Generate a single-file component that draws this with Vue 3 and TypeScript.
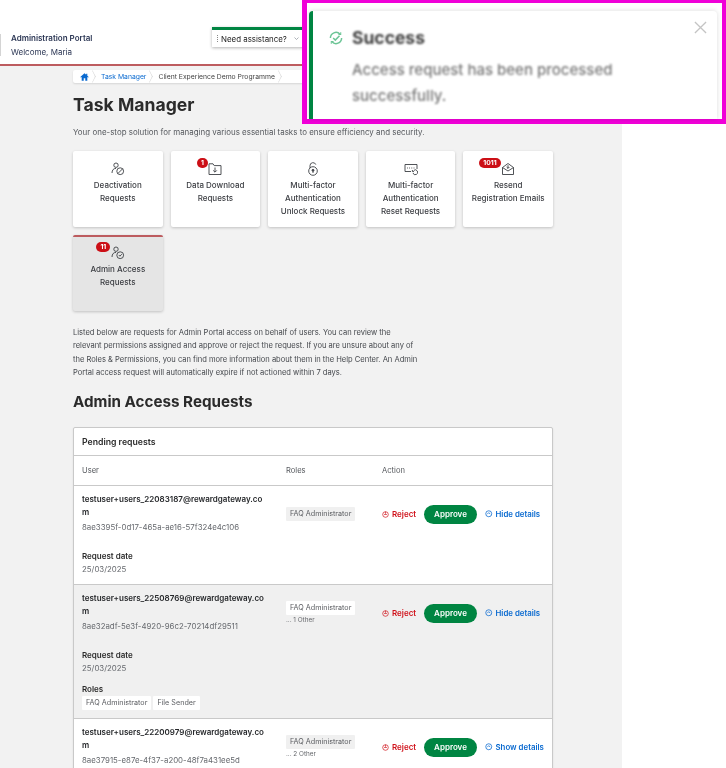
<script setup lang="ts">
type Task = { key: string; lines: string[]; badge?: string; active?: boolean }
type Req = {
  email: string
  id: string
  date: string
  role: string
  other?: string
  open: boolean
  shaded?: boolean
  roles?: string[]
}

const tasks: Task[] = [
  { key: 'block', lines: ['Deactivation', 'Requests'] },
  { key: 'folder', lines: ['Data Download', 'Requests'], badge: '1' },
  { key: 'lock', lines: ['Multi-factor', 'Authentication', 'Unlock Requests'] },
  { key: 'reset', lines: ['Multi-factor', 'Authentication', 'Reset Requests'] },
  { key: 'mail', lines: ['Resend', 'Registration Emails'], badge: '1011' },
  { key: 'admin', lines: ['Admin Access', 'Requests'], badge: '11', active: true }
]

const requests: Req[] = [
  {
    email: 'testuser+users_22083187@rewardgateway.com',
    id: '8ae3395f-0d17-465a-ae16-57f324e4c106',
    date: '25/03/2025',
    role: 'FAQ Administrator',
    open: true
  },
  {
    email: 'testuser+users_22508769@rewardgateway.com',
    id: '8ae32adf-5e3f-4920-96c2-70214df29511',
    date: '25/03/2025',
    role: 'FAQ Administrator',
    other: '... 1 Other',
    open: true,
    shaded: true,
    roles: ['FAQ Administrator', 'File Sender']
  },
  {
    email: 'testuser+users_22200979@rewardgateway.com',
    id: '8ae37915-e87e-4f37-a200-48f7a431ee5d',
    date: '25/03/2025',
    role: 'FAQ Administrator',
    other: '... 2 Other',
    open: false
  }
]
</script>

<template>
  <div class="page">
    <header class="topbar">
      <div class="brand">
        <div class="brand-name">Administration Portal</div>
        <div class="brand-user">Welcome, Maria</div>
      </div>
      <div class="assist">
        <span class="grip"></span>
        <span>Need assistance?</span>
        <svg class="chev" viewBox="0 0 10 10" width="5" height="5"><path d="M1 3l4 4 4-4" fill="none" stroke="#8a8f98" stroke-width="1.4" /></svg>
      </div>
    </header>

    <main class="content">
      <nav class="crumbs">
        <span class="crumb home">
          <svg viewBox="0 0 16 14" width="9" height="8"><path d="M8 0.5L0.5 7l1 1.1L3 6.9V13.5h3.6V9h2.8v4.5H13V6.9l1.5 1.2 1-1.1-2.5-2.2V1h-2v2.1z" fill="#0a6ad0" /></svg>
        </span>
        <span class="crumb link">Task Manager</span>
        <span class="crumb">Client Experience Demo Programme</span>
      </nav>

      <h1>Task Manager</h1>
      <p class="lead">Your one-stop solution for managing various essential tasks to ensure efficiency and security.</p>

      <section class="tasks">
        <div v-for="t in tasks" :key="t.key" class="task" :class="{ active: t.active }">
          <div class="task-icon">
            <span v-if="t.badge" class="badge">{{ t.badge }}</span>
            <svg viewBox="0 0 14 14" width="14" height="14" fill="none" stroke="#3c3f44" stroke-width="0.9">
              <template v-if="t.key === 'block'">
                <circle cx="5" cy="3.2" r="2.2" />
                <path d="M1 11c0-3 1.6-4.6 4-4.6" />
                <circle cx="9.2" cy="9.2" r="3.4" />
                <path d="M6.8 11.6l4.8-4.8" />
              </template>
              <template v-else-if="t.key === 'folder'">
                <path d="M1 12.5V1.8h4l1.2 1.8h6.8v8.9z" />
                <path d="M7 5.5v4.5M5.2 8.4L7 10.2l1.8-1.8" />
              </template>
              <template v-else-if="t.key === 'lock'">
                <path d="M4 6V3.6a3 3 0 0 1 5.8-1" />
                <circle cx="7" cy="9" r="4.3" />
                <circle cx="7" cy="8.3" r="1" fill="#3c3f44" />
                <path d="M7 9v2" />
              </template>
              <template v-else-if="t.key === 'reset'">
                <path d="M7 9.5H1V2.5h12V7" />
                <path d="M3 6h.8M5.2 6H6M7.4 6h.8M9.6 6h.8" stroke-width="1.2" />
                <path d="M9 11a2.4 2.4 0 1 0 .8-2.6" />
                <path d="M8.4 8v1.6H10" />
              </template>
              <template v-else-if="t.key === 'mail'">
                <path d="M1.5 5.5L7 1.5l5.5 4v7h-11z" />
                <path d="M1.5 5.5L7 9l5.5-3.5" />
                <path d="M7 3.2v3.2M5.6 5L7 6.4 8.4 5" />
              </template>
              <template v-else>
                <circle cx="5" cy="3.2" r="2.2" />
                <path d="M1 11c0-3 1.6-4.6 4-4.6" />
                <circle cx="9.2" cy="9.2" r="3.4" />
                <path d="M7.8 9l1.1 1.2 1.9-2" />
              </template>
            </svg>
          </div>
          <div class="task-text">
            <div v-for="l in t.lines" :key="l">{{ l }}</div>
          </div>
        </div>
      </section>

      <p class="intro">
        Listed below are requests for Admin Portal access on behalf of users. You can review the
        relevant permissions assigned and approve or reject the request. If you are unsure about any of
        the Roles &amp; Permissions, you can find more information about them in the Help Center. An Admin
        Portal access request will automatically expire if not actioned within 7 days.
      </p>

      <h2>Admin Access Requests</h2>

      <section class="panel">
        <div class="panel-title">Pending requests</div>
        <div class="row head">
          <div>User</div>
          <div>Roles</div>
          <div>Action</div>
        </div>
        <div v-for="r in requests" :key="r.id" class="req" :class="{ shaded: r.shaded }">
          <div class="row body">
            <div>
              <div class="email">{{ r.email }}</div>
              <div class="uid">{{ r.id }}</div>
            </div>
            <div class="role-cell">
              <span class="tag">{{ r.role }}</span>
              <div v-if="r.other" class="other">{{ r.other }}</div>
            </div>
            <div class="actions">
              <span class="reject">
                <svg viewBox="0 0 10 10" width="7" height="7" fill="none" stroke="#d0121b" stroke-width="1"><circle cx="5" cy="5" r="4" /><path d="M3 5h4M5 1v3" /></svg>
                Reject
              </span>
              <button class="approve" type="button">Approve</button>
              <span class="toggle">
                <svg viewBox="0 0 10 10" width="7.5" height="7.5" fill="none" stroke="#0a6ad0" stroke-width="1"><circle cx="5" cy="5" r="4" /><path d="M3 5.5l2-2 2 2" /></svg>
                {{ r.open ? 'Hide details' : 'Show details' }}
              </span>
            </div>
          </div>
          <div v-if="r.open" class="details">
            <div class="label">Request date</div>
            <div class="date">{{ r.date }}</div>
            <template v-if="r.roles">
              <div class="label roles-label">Roles</div>
              <div class="tags">
                <span v-for="x in r.roles" :key="x" class="tag">{{ x }}</span>
              </div>
            </template>
          </div>
        </div>
      </section>
    </main>

    <aside class="highlight">
      <div class="toast">
        <div class="toast-body">
          <div class="toast-head">
            <svg viewBox="0 0 16 16" width="14" height="14" fill="none" stroke="#6cc596" stroke-width="1.7">
              <path d="M1.6 8a6.4 6.4 0 0 1 11-4.4" />
              <path d="M14.4 8a6.4 6.4 0 0 1-11 4.4" />
              <path d="M4.8 8l2.4 2.4L12 5.4" />
              <path d="M13.4 1.4v2.6h-2.6M2.6 14.6V12h2.6" stroke-width="1.2" />
            </svg>
            <span class="soft">Success</span>
          </div>
          <p class="soft">Access request has been processed successfully.</p>
        </div>
        <svg class="close" viewBox="0 0 14 14" width="13" height="13"><path d="M1 1l12 12M13 1L1 13" stroke="#c4c4c4" stroke-width="1.4" /></svg>
      </div>
    </aside>
  </div>
</template>

<style scoped>
.page {
  position: relative;
  width: 726px;
  height: 768px;
  overflow: hidden;
  background: #fff;
  font-family: Inter, "Liberation Sans", sans-serif;
  color: #33363b;
}

.topbar {
  display: flex;
  height: 66px;
  box-sizing: border-box;
  border-bottom: 2px solid #bd5c5f;
  padding-top: 27px;
  filter: blur(0.3px);
}
.brand {
  width: 201px;
  margin-top: 7px;
  height: 22px;
  padding-left: 10px;
  box-sizing: border-box;
  border-left: 1px solid #d4d4d4;
  font-size: 8px;
  color: #2b3654;
}
.brand-name {
  margin-top: -1px;
  font-weight: 600;
  line-height: 10px;
}
.brand-user {
  margin-top: 4px;
  line-height: 10px;
}
.assist {
  display: flex;
  align-items: center;
  gap: 2px;
  width: 100px;
  height: 20px;
  margin-left: 11px;
  box-sizing: border-box;
  padding-left: 5px;
  border-top: 3px solid #008542;
  background: #fff;
  box-shadow: 0 1px 3px rgba(0, 0, 0, 0.3);
  font-size: 7.9px;
  color: #222;
}
.grip {
  width: 1px;
  height: 7px;
  border-left: 1px dotted #888;
}
.chev {
  margin-left: 5px;
}

.content {
  width: 622px;
  height: 702px;
  box-sizing: border-box;
  padding: 4px 0 0 73px;
  background: #f2f2f2;
  filter: blur(0.3px);
}
.crumbs {
  display: flex;
  align-items: center;
  width: 240px;
  height: 13px;
  box-sizing: border-box;
  padding-left: 7px;
  background: #fff;
  border-radius: 2px;
  box-shadow: 0 1px 2px rgba(0, 0, 0, 0.12);
  font-size: 6.8px;
  color: #444;
}
.crumb {
  position: relative;
  padding-right: 8px;
  margin-right: 4px;
  line-height: 13px;
}
.crumb::after {
  content: "";
  position: absolute;
  right: 0;
  top: 2px;
  width: 8px;
  height: 8px;
  border-top: 1px solid #d8d8d8;
  border-right: 1px solid #d8d8d8;
  transform: scaleX(0.5) rotate(45deg);
}
.home {
  display: flex;
  align-items: center;
  height: 13px;
}
.link {
  color: #0a6ad0;
}

h1 {
  margin: 10px 0 0;
  font-size: 17.6px;
  line-height: 24px;
  font-weight: 700;
  color: #2b2b2b;
}
.lead {
  margin: 9px 0 0;
  font-size: 7.94px;
  line-height: 12px;
  color: #55585d;
}

.tasks {
  display: grid;
  grid-template-columns: repeat(5, 1fr);
  gap: 8px;
  width: 480px;
  margin-top: 13px;
}
.task {
  height: 76px;
  box-sizing: border-box;
  padding-top: 11px;
  background: #fff;
  border-radius: 2px;
  box-shadow: 0 1px 3px rgba(0, 0, 0, 0.2);
  text-align: center;
  font-size: 8px;
  font-weight: 500;
  color: #3b3d42;
}
.task.active {
  padding-top: 9px;
  border-top: 2px solid #bd5c5f;
  background: #e5e5e5;
}
.task-icon {
  position: relative;
  width: 14px;
  height: 14px;
  margin: 0 auto;
}
.badge {
  position: absolute;
  right: calc(100% + 0.5px);
  top: -4px;
  min-width: 11px;
  height: 10px;
  box-sizing: border-box;
  padding: 0 4px;
  border-radius: 6px;
  background: #cc0f16;
  color: #fff;
  font-size: 6.8px;
  font-weight: 700;
  line-height: 10px;
}
.task-text {
  margin-top: 2.5px;
  line-height: 13px;
}

.intro {
  width: 346px;
  margin: 15px 0 0;
  font-size: 7.55px;
  line-height: 13.3px;
  color: #44474c;
}
h2 {
  margin: 13px 0 0;
  font-size: 15.2px;
  line-height: 20px;
  font-weight: 700;
  color: #2b2b2b;
}

.panel {
  width: 480px;
  margin-top: 15px;
  box-sizing: border-box;
  background: #fff;
  border: 1px solid #c9c9c9;
  border-radius: 2px;
  box-shadow: 0 1px 2px rgba(0, 0, 0, 0.1);
  font-size: 7.6px;
}
.panel-title {
  height: 27px;
  padding-left: 8px;
  line-height: 29px;
  font-size: 8.7px;
  font-weight: 600;
  color: #2b2b2b;
  border-bottom: 1px solid #c9c9c9;
}
.row {
  display: grid;
  grid-template-columns: 204px 96px 1fr;
  padding: 0 8px;
}
.head {
  height: 30px;
  box-sizing: border-box;
  align-items: center;
  color: #55585d;
  border-bottom: 1px solid #c9c9c9;
}
.req {
  border-bottom: 1px solid #c9c9c9;
}
.req:last-child {
  padding-bottom: 10px;
}
.req.shaded {
  background: #f0f0f0;
}
.req.shaded .tag {
  background: #fff;
}
.body {
  align-items: center;
  padding-top: 7px;
}
.email {
  width: 184px;
  font-size: 8px;
  font-weight: 600;
  line-height: 13px;
  color: #25272a;
  word-break: break-all;
}
.uid {
  margin-top: 2px;
  line-height: 12px;
  font-size: 7.85px;
  color: #65686d;
}
.date {
  margin-top: 1px;
  line-height: 12px;
  font-size: 7.85px;
  color: #65686d;
}
.role-cell,
.actions {
  margin-top: 2px;
}
.tag {
  display: inline-block;
  height: 14px;
  padding: 0 4px;
  border-radius: 1px;
  background: #f0f0f0;
  line-height: 14px;
  font-size: 7.2px;
  color: #5a5c60;
}
.role-cell .tag {
  display: block;
  width: fit-content;
}
.other {
  line-height: 9px;
  margin-top: 1px;
  font-size: 6.4px;
  color: #66686c;
}
.actions {
  display: flex;
  align-items: center;
  font-size: 8px;
  font-weight: 600;
}
.reject {
  display: flex;
  align-items: center;
  gap: 3px;
  width: 42px;
  color: #d0121b;
}
.approve {
  width: 53px;
  height: 19px;
  padding: 0;
  border: none;
  border-radius: 10px;
  background: #008542;
  color: #fff;
  font: inherit;
}
.toggle {
  display: flex;
  align-items: center;
  gap: 3px;
  margin-left: 8px;
  font-size: 7.85px;
  white-space: nowrap;
  color: #0a6ad0;
}
.details {
  padding: 17px 8px 9px;
}
.label {
  line-height: 12px;
  font-size: 8px;
  font-weight: 600;
  color: #2b2b2b;
}
.roles-label {
  margin-top: 9px;
}
.tags {
  display: flex;
  gap: 2px;
  margin-top: 1px;
  margin-bottom: -1px;
}

.highlight {
  position: absolute;
  top: 0;
  right: 0;
  width: 424px;
  height: 124px;
  box-sizing: border-box;
  padding: 8px 5px 0 2px;
  border-style: solid;
  border-color: #f000d8;
  border-width: 3px 4px 5px 5px;
  background: #fff;
}
.toast {
  position: relative;
  height: 108px;
  box-sizing: border-box;
  border-left: 4px solid #008542;
  border-radius: 4px 4px 0 0;
  background: #fff;
  box-shadow: 0 0 5px rgba(0, 0, 0, 0.14);
}
.toast-body {
  padding: 17px 90px 0 16px;
}
.soft {
  filter: blur(0.8px);
}
.toast-head {
  display: flex;
  align-items: center;
  gap: 9px;
  font-size: 17.5px;
  font-weight: 700;
  line-height: 20px;
  color: #3d3d3d;
}
.toast-body p {
  margin: 9px 0 0 23px;
  font-size: 15px;
  line-height: 26px;
  font-weight: 500;
  color: #777;
}
.close {
  position: absolute;
  top: 10px;
  right: 10px;
}
</style>

<style>
html,
body {
  margin: 0;
  background: #fff;
}
</style>
